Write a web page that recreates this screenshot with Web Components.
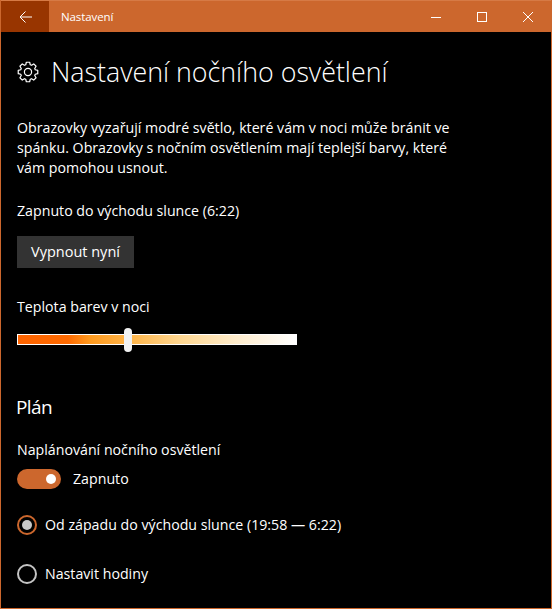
<!DOCTYPE html>
<html lang="cs">
<head>
<meta charset="utf-8">
<title>Nastavení</title>
<style>
  html, body { margin: 0; padding: 0; background: #000; }
  body { font-family: "Open Sans", "Noto Sans", sans-serif; }
</style>
</head>
<body>
<settings-window>
  <page-title>Nastavení nočního osvětlení</page-title>
  <p-text style="margin-top:26px">Obrazovky vyzařují modré světlo, které vám v noci může bránit ve<br>spánku. Obrazovky s nočním osvětlením mají teplejší barvy, které<br>vám pomohou usnout.</p-text>
  <p-text style="margin-top:23px">Zapnuto do východu slunce (6:22)</p-text>
  <win-button style="margin-top:15px">Vypnout nyní</win-button>
  <p-text style="margin-top:29px">Teplota barev v noci</p-text>
  <temp-slider style="margin-top:11px" value="111"></temp-slider>
  <h-section style="margin-top:42px">Plán</h-section>
  <p-text style="margin-top:20px">Naplánování nočního osvětlení</p-text>
  <win-toggle style="margin-top:9px">Zapnuto</win-toggle>
  <win-radio style="margin-top:26px" checked>Od západu do východu slunce (19:58 — 6:22)</win-radio>
  <win-radio style="margin-top:29px">Nastavit hodiny</win-radio>
</settings-window>
<script>
  const define = (name, css, html, extra) => {
    customElements.define(name, class extends HTMLElement {
      connectedCallback() {
        if (this.shadowRoot) return
        this.attachShadow({ mode: 'open' }).innerHTML = `<style>${css}</style>${html}`
        if (extra) extra(this)
      }
    })
  }

  // 8-tooth settings gear, centred on 11,11
  const gearPath = () => {
    const pts = []
    for (let i = 0; i < 8; i++) {
      const a = (i * Math.PI) / 4 - Math.PI / 2
      const at = (r, d) => [(11 + r * Math.cos(a + d)).toFixed(2), (11 + r * Math.sin(a + d)).toFixed(2)].join(' ')
      pts.push(at(7.6, -0.3), at(9.9, -0.17), at(9.9, 0.17), at(7.6, 0.3))
    }
    return 'M' + pts.join('L') + 'Z'
  }

  define('settings-window', `
    :host { display:flex; flex-direction:column; box-sizing:border-box; width:552px; height:609px; overflow:hidden;
            background:#000; color:#fff; border:1px solid #cc672d; border-top:0; }
    .bar { display:flex; align-items:center; height:32px; flex:none; background:#cc672d; border-top:1px solid #d67a45; box-sizing:border-box; }
    .back { width:48px; height:31px; display:flex; align-items:center; justify-content:center; background:#983500; }
    .name { font-size:11.5px; margin-left:12px; flex:1; letter-spacing:-.1px; }
    .ctl { width:46px; height:31px; display:flex; align-items:center; justify-content:center; }
    .content { padding:0 16px; display:flex; flex-direction:column; align-items:flex-start; }
  `, `
    <div class="bar">
      <div class="back"><svg width="16" height="16" viewBox="0 0 16 16" fill="none" stroke="#fff" stroke-width="1"><path d="M3 8h12M8.500 2.500 3 8l5.500 5.500"/></svg></div>
      <div class="name">Nastavení</div>
      <div class="ctl"><svg width="10" height="10" viewBox="0 0 10 10"><path d="M0 5.500h10" stroke="#fff"/></svg></div>
      <div class="ctl"><svg width="10" height="10" viewBox="0 0 10 10" fill="none"><rect x=".5" y=".5" width="9" height="9" stroke="#fff"/></svg></div>
      <div class="ctl"><svg width="10" height="10" viewBox="0 0 10 10"><path d="M0 0 10 10M10 0 0 10" stroke="#fff"/></svg></div>
    </div>
    <div class="content"><slot></slot></div>
  `)

  define('page-title', `
    :host { display:flex; align-items:center; gap:12px; margin-top:20px; font-size:26.8px; line-height:40px; font-weight:300; white-space:nowrap; }
    svg { flex:none; }
  `, `
    <svg width="22" height="22" viewBox="0 0 22 22" fill="none" stroke="#fff" stroke-width="1.2" stroke-linejoin="round">
      <circle cx="11" cy="11" r="3.600"/>
      <path d="${gearPath()}"/>
    </svg>
    <slot></slot>
  `)

  define('p-text', `
    :host { display:block; font-size:14.2px; line-height:20px; color:#fff; white-space:nowrap; }
  `, `<slot></slot>`)

  define('h-section', `
    :host { display:block; font-size:19px; line-height:26px; color:#fff; letter-spacing:-.6px; margin-left:-1px; }
  `, `<slot></slot>`)

  define('win-button', `
    :host { display:block; background:#333; color:#fff; font-size:14.5px; line-height:20px; padding:6px 14px; }
  `, `<slot></slot>`)

  define('temp-slider', `
    :host { display:block; position:relative; width:280px; height:24px; }
    .track { position:absolute; left:0; right:0; top:6px; height:11px; box-sizing:border-box; border:1px solid #fff;
             background:linear-gradient(90deg,#ff6400 0%,#ff6a00 18%,#ff9a1e 26%,#ffb84f 42%,#ffd68f 58%,#ffeccb 78%,#fff 100%); }
    .thumb { position:absolute; top:0; width:8px; height:24px; border-radius:4px; background:#f2f2f2; margin-left:-4px; }
  `, `<div class="track"></div><div class="thumb"></div>`, (el) => {
    el.shadowRoot.querySelector('.thumb').style.left = el.getAttribute('value') + 'px'
  })

  define('win-toggle', `
    :host { display:flex; align-items:center; gap:12px; font-size:14.2px; line-height:20px; }
    .sw { width:44px; height:20px; border-radius:10px; background:#cc672d; position:relative; }
    .sw i { position:absolute; right:5px; top:5px; width:10px; height:10px; border-radius:50%; background:#fff; }
  `, `<div class="sw"><i></i></div><slot></slot>`)

  define('win-radio', `
    :host { display:flex; align-items:center; gap:8px; font-size:14.2px; line-height:20px; white-space:nowrap; }
    .dot { width:20px; height:20px; box-sizing:border-box; border-radius:50%; border:2px solid #c4c4c4; display:flex; align-items:center; justify-content:center; }
    :host([checked]) .dot { border-color:#cc672d; }
    :host([checked]) .dot::after { content:""; width:10px; height:10px; border-radius:50%; background:#c8c8c8; }
  `, `<div class="dot"></div><slot></slot>`)
</script>
</body>
</html>
